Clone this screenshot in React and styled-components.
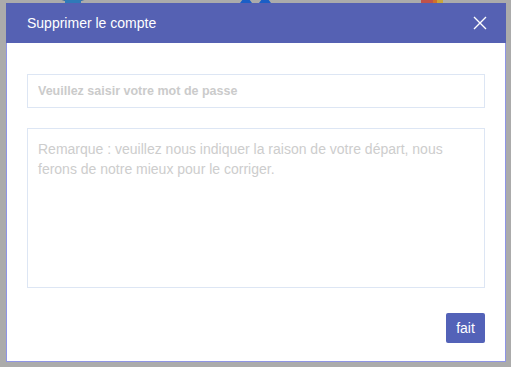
import React from "react";
import styled, { createGlobalStyle } from "styled-components";

const GlobalStyle = createGlobalStyle`
  html, body {
    margin: 0;
    padding: 0;
    background: #ababab;
    font-family: "Liberation Sans", Arial, sans-serif;
  }
  * { box-sizing: border-box; }
`;

const Page = styled.div`
  position: relative;
  width: 511px;
  height: 367px;
  overflow: hidden;
  background: #ababab;
`;

const BehindBar = styled.div`
  display: flex;
  align-items: flex-end;
  height: 40px;
  margin-top: -37px;
  padding-left: 53px;
`;

const BehindIcon = styled.div`
  flex-shrink: 0;
  margin-left: ${(p) => p.$offset}px;
  line-height: 0;
`;

const Modal = styled.div`
  position: absolute;
  top: 3px;
  left: 6px;
  width: 500px;
  height: 359px;
  background: #fff;
  border: 1px solid #8e94e6;
  display: flex;
  flex-direction: column;
`;

const Header = styled.div`
  height: 40px;
  margin: -1px -1px 0 -1px;
  padding: 0 19px 0 21px;
  background: #5561b3;
  display: flex;
  align-items: center;
  justify-content: space-between;
`;

const Title = styled.h3`
  margin: 0;
  font-size: 14px;
  font-weight: normal;
  color: #fff;
`;

const CloseButton = styled.button`
  border: 0;
  background: none;
  padding: 0;
  line-height: 0;
  cursor: pointer;
`;

const Body = styled.div`
  flex: 1;
  padding: 31px 20px 18px 20px;
  display: flex;
  flex-direction: column;
`;

const Input = styled.input`
  width: 458px;
  height: 34px;
  border: 1px solid #dde6f4;
  padding: 0 10px;
  font-family: "Liberation Sans", Arial, sans-serif;
  font-size: 12.5px;
  font-weight: bold;
  color: #555;
  outline: none;
  &::placeholder {
    color: #cbcbcb;
  }
`;

const TextArea = styled.textarea`
  width: 458px;
  height: 160px;
  margin-top: 20px;
  border: 1px solid #dde6f4;
  padding: 10px 10px;
  font-family: "Liberation Sans", Arial, sans-serif;
  font-size: 14px;
  line-height: 20px;
  color: #555;
  resize: none;
  outline: none;
  &::placeholder {
    color: #cdcdcd;
  }
`;

const Footer = styled.div`
  margin-top: auto;
  display: flex;
  justify-content: flex-end;
`;

const SubmitButton = styled.button`
  width: 39px;
  height: 30px;
  border: 0;
  border-radius: 2px;
  background: #5362b8;
  color: #fff;
  font-family: "Liberation Sans", Arial, sans-serif;
  font-size: 14px;
  padding: 0;
  cursor: pointer;
`;

const App = () => {
  return (
    <Page>
      <GlobalStyle />
      <BehindBar>
        <BehindIcon $offset={0}>
          <svg width="40" height="40" viewBox="0 0 40 40">
            <path d="M2 0 H38 V34 Q20 44 2 34 Z" fill="#1f5f9c" />
            <path d="M12 30 Q20 38 28 30 V40 H12 Z" fill="#2f7ab8" />
          </svg>
        </BehindIcon>
        <BehindIcon $offset={146}>
          <svg width="33" height="40" viewBox="0 0 33 40">
            <path d="M1 40 L7 32 L13 40 Z" fill="#1a5ec6" />
            <path d="M20 40 L26 32 L32 40 Z" fill="#1a5ec6" />
          </svg>
        </BehindIcon>
        <BehindIcon $offset={149}>
          <svg width="22" height="40" viewBox="0 0 22 40">
            <rect x="0" y="30" width="12" height="10" fill="#c0524a" />
            <rect x="12" y="30" width="4" height="10" fill="#d0702c" />
            <rect x="16" y="30" width="6" height="10" fill="#c9a53a" />
          </svg>
        </BehindIcon>
      </BehindBar>
      <Modal>
        <Header>
          <Title>Supprimer le compte</Title>
          <CloseButton aria-label="close">
            <svg width="14" height="14" viewBox="0 0 14 14">
              <path d="M1 1 L13 13 M13 1 L1 13" stroke="#fff" strokeWidth="1.4" />
            </svg>
          </CloseButton>
        </Header>
        <Body>
          <Input type="password" placeholder="Veuillez saisir votre mot de passe" />
          <TextArea placeholder="Remarque : veuillez nous indiquer la raison de votre départ, nous ferons de notre mieux pour le corriger." />
          <Footer>
            <SubmitButton>fait</SubmitButton>
          </Footer>
        </Body>
      </Modal>
    </Page>
  );
};

export default App;
